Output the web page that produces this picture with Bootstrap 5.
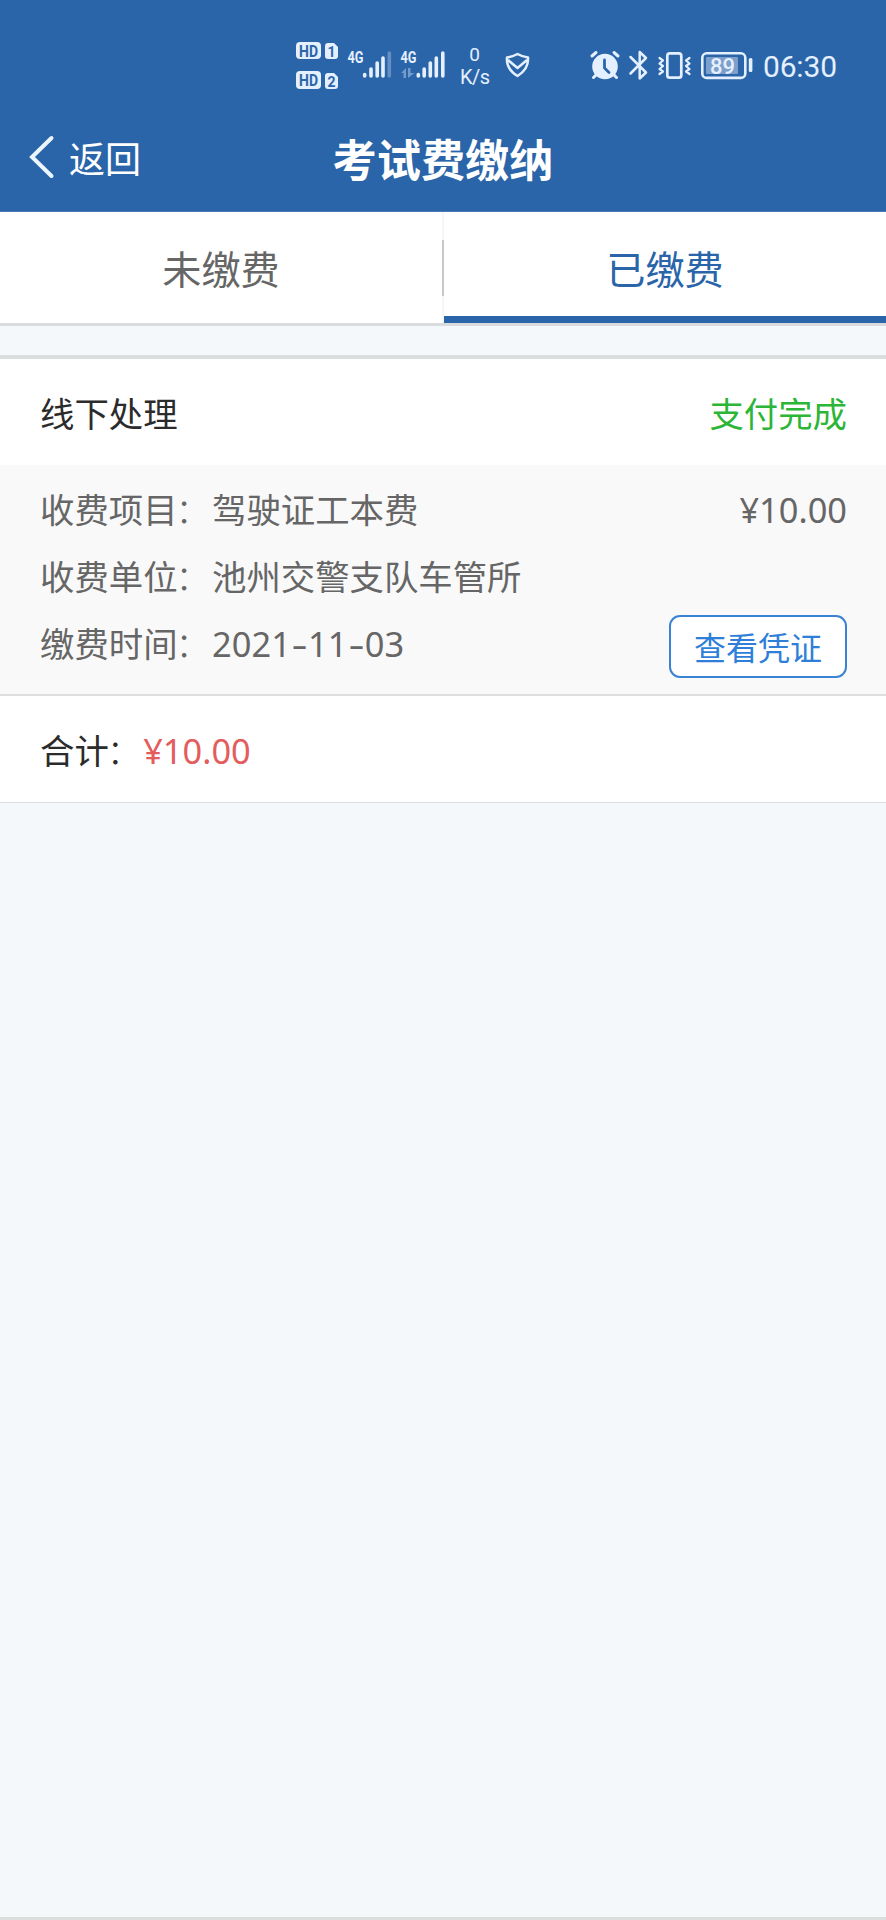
<!DOCTYPE html>
<html lang="zh-CN">
<head>
<meta charset="utf-8">
<meta name="viewport" content="width=device-width, initial-scale=1">
<title>考试费缴纳</title>
<link href="https://cdn.jsdelivr.net/npm/bootstrap@5.3.0/dist/css/bootstrap.min.css" rel="stylesheet">
<style>
body{background:#f4f8fa;font-family:"Noto Sans","Noto Sans CJK SC",sans-serif;font-size:34.4px;line-height:50px;color:#2b2b2b;min-height:1920px}
.cjk{font-family:"Noto Sans CJK SC",sans-serif}
.top-area{background:#2b65a9;height:212px;color:#fff;border-bottom:1px solid #4a7ab3}
.status-bar{height:112px;padding-left:290px}
.status-bar svg{display:block;flex:none}
.title-bar{height:99px;padding:0 28px}
.title-bar>div{flex:1 1 0}
.back-link{font-size:36px;color:#fff;gap:14px}
.page-title{font-size:44.2px;font-weight:700;line-height:60px;flex:none!important;white-space:nowrap;padding-bottom:7px}
.tab-bar{height:114px;background:#fff;border-bottom:3px solid #d9dbdd}
.tab-item{font-size:39.2px;color:#666;padding-bottom:1px;text-decoration:none;height:111px}
.tab-item.active{color:#2b65a9;border-bottom:7px solid #2b65a9;padding-top:6px;padding-bottom:0}
.tab-rule{width:2px;flex:none;height:111px;background:linear-gradient(#f4f6f7 28px,#c8c8c8 28px 84px,#f4f6f7 84px)}
.bill{margin-top:29px;border-top:4px solid #dbdfde;border-bottom:1.5px solid #dcdfe1;background:#fff}
.bill-head{height:106px;padding:0 39px 1px 40px}
.bill-body{height:231px;background:#f9f9f9;border-bottom:2px solid #dedede;padding:12px 39px 0 40px;color:#666}
.bill-row{height:66.5px}
.bill-row .cjk:not(.btn),.bill-foot .cjk{transform:translateY(-2px)}
.bill-foot{height:106px;padding:4px 40px 0}
.colon{display:inline-block;font-weight:300;transform:translateX(-2px)}
.done{color:#2cb536}
.sum{color:#e35d5d}
.proof-btn{width:178px;height:63px;border:2px solid #3a83d4;border-radius:11px;color:#2f7fd8;background:#fff;font-size:32px;line-height:48px;margin-top:6px;padding:0}
.dash{display:inline-block;width:17px;text-align:center;transform:scaleX(1.45)}
.date{letter-spacing:.1px}
.page-end{height:3px;background:#dbdfde}
</style>
</head>
<body class="d-flex flex-column">
<header class="top-area">
  <div class="status-bar d-flex">
    <svg width="290" height="112" viewBox="290 0 290 112" font-family="Roboto,sans-serif" fill="#e4f0ff">
      <rect x="296" y="42" width="25" height="17" rx="4"/>
      <rect x="296" y="71" width="25" height="18" rx="4"/>
      <path d="M328 43h6l4 4v9q0 3-3 3h-7q-3 0-3-3v-10q0-3 3-3zM328 73h6l4 4v9q0 3-3 3h-7q-3 0-3-3v-10q0-3 3-3z"/>
      <g fill="#2b65a9" font-size="16" font-weight="700">
        <text x="299" y="56.500" textLength="19" lengthAdjust="spacingAndGlyphs">HD</text>
        <text x="299" y="86" textLength="19" lengthAdjust="spacingAndGlyphs">HD</text>
        <text x="327.500" y="56.500" font-size="14">1</text>
        <text x="327.500" y="86.500" font-size="14">2</text>
      </g>
      <g font-size="16.500" font-weight="700">
        <text x="347.500" y="63" textLength="16" lengthAdjust="spacingAndGlyphs">4G</text>
        <text x="400.500" y="63" textLength="16" lengthAdjust="spacingAndGlyphs">4G</text>
      </g>
      <g stroke="#e4f0ff" stroke-width="3.600" stroke-linecap="round">
        <path d="M364.700 74.500v1.500M371 69v7M377.200 63v13M383 58v18"/>
        <path d="M389.300 53v23" opacity=".3"/>
        <path d="M418.300 74.500v1.500M424.200 69v7M430.300 63v13M436.300 58v18M442.800 53v23"/>
      </g>
      <path d="M401 73l5-5v10h-2.500v-5zM408 68h2.500v5h4l-6.500 5z" opacity=".4"/>
      <text x="474.500" y="61" font-size="19" text-anchor="middle">0</text>
      <text x="460" y="84" font-size="20" textLength="30">K/s</text>
      <path d="M517.500 54Q523 57 528 57.500Q529 69 517.500 76Q506 69 507 57.500Q512 57 517.500 54zM508 60L517.500 68L527 60" fill="none" stroke="#e4f0ff" stroke-width="2.500" stroke-linejoin="round"/>
    </svg>
    <svg width="280" height="112" viewBox="580 0 280 112" font-family="Roboto,sans-serif" fill="#e4f0ff">
      <circle cx="605" cy="66.500" r="12.800"/>
      <path d="M592 56l4-3.500M614 52.500l4 3.500M597 74l-3.500 3.500M613 74l3.500 3.500" stroke="#e4f0ff" stroke-width="3" stroke-linecap="round"/>
      <path d="M604.500 60v8l4.500 4.500" fill="none" stroke="#2b65a9" stroke-width="2.800" stroke-linecap="round"/>
      <path d="M630.500 57L646 72.500L639.700 78.500V52L646 58L630.500 73.500" fill="none" stroke="#e4f0ff" stroke-width="2.500" stroke-linecap="round" stroke-linejoin="round"/>
      <rect x="667.300" y="53.300" width="14" height="24.400" rx="2.500" fill="none" stroke="#e4f0ff" stroke-width="2.700"/>
      <path d="M659.500 58l3.500 2.500l-3.500 3l3.500 2.500l-3.500 3l3.500 2.500l-3.500 2.500M689.500 58l-3.500 2.500l3.500 3l-3.500 2.500l3.500 3l-3.500 2.500l3.500 2.500" fill="none" stroke="#e4f0ff" stroke-width="2.200" stroke-linecap="round" stroke-linejoin="round"/>
      <rect x="702.300" y="53.300" width="43" height="24.600" rx="4.500" fill="none" stroke="#e4f0ff" stroke-width="2.600"/>
      <rect x="706" y="57" width="32" height="17" rx="1" fill="#7f9fcb"/>
      <rect x="748.800" y="58" width="3.600" height="14" rx="1.500"/>
      <text x="710" y="73.700" font-size="22" font-weight="500" textLength="25">89</text>
      <text x="763" y="77" font-size="30" textLength="74">06:30</text>
    </svg>
  </div>
  <div class="title-bar d-flex align-items-center">
    <div>
      <a href="#" class="back-link cjk d-inline-flex align-items-center text-decoration-none">
        <svg width="27" height="44" viewBox="0 0 27 44" fill="none" stroke="#edf6ff" stroke-width="4" stroke-linecap="round"><path d="M23.500 3L4 22L23.500 41"/></svg>
        <span>返回</span>
      </a>
    </div>
    <h1 class="page-title cjk m-0">考试费缴纳</h1>
    <div></div>
  </div>
</header>
<nav class="tab-bar d-flex cjk">
  <a href="#" class="tab-item d-flex flex-fill w-50 align-items-center justify-content-center">未缴费</a>
  <span class="tab-rule"></span>
  <a href="#" class="tab-item active d-flex flex-fill w-50 align-items-center justify-content-center">已缴费</a>
</nav>
<main class="flex-grow-1">
  <section class="bill">
    <div class="bill-head cjk d-flex align-items-center justify-content-between">
      <span>线下处理</span><span class="done">支付完成</span>
    </div>
    <div class="bill-body">
      <div class="bill-row d-flex align-items-center justify-content-between"><span class="cjk">收费项目<span class="colon">：</span>驾驶证工本费</span><span>¥10.00</span></div>
      <div class="bill-row d-flex align-items-center"><span class="cjk">收费单位<span class="colon">：</span>池州交警支队车管所</span></div>
      <div class="bill-row d-flex align-items-center justify-content-between">
        <span><span class="cjk">缴费时间<span class="colon">：</span></span><span class="date">2021<span class="dash">-</span>11<span class="dash">-</span>03</span></span>
        <button type="button" class="btn proof-btn cjk">查看凭证</button>
      </div>
    </div>
    <div class="bill-foot d-flex align-items-center"><span class="cjk">合计<span class="colon">：</span></span><span class="sum">¥10.00</span></div>
  </section>
</main>
<div class="page-end"></div>
<script src="https://cdn.jsdelivr.net/npm/bootstrap@5.3.0/dist/js/bootstrap.bundle.min.js"></script>
</body>
</html>
